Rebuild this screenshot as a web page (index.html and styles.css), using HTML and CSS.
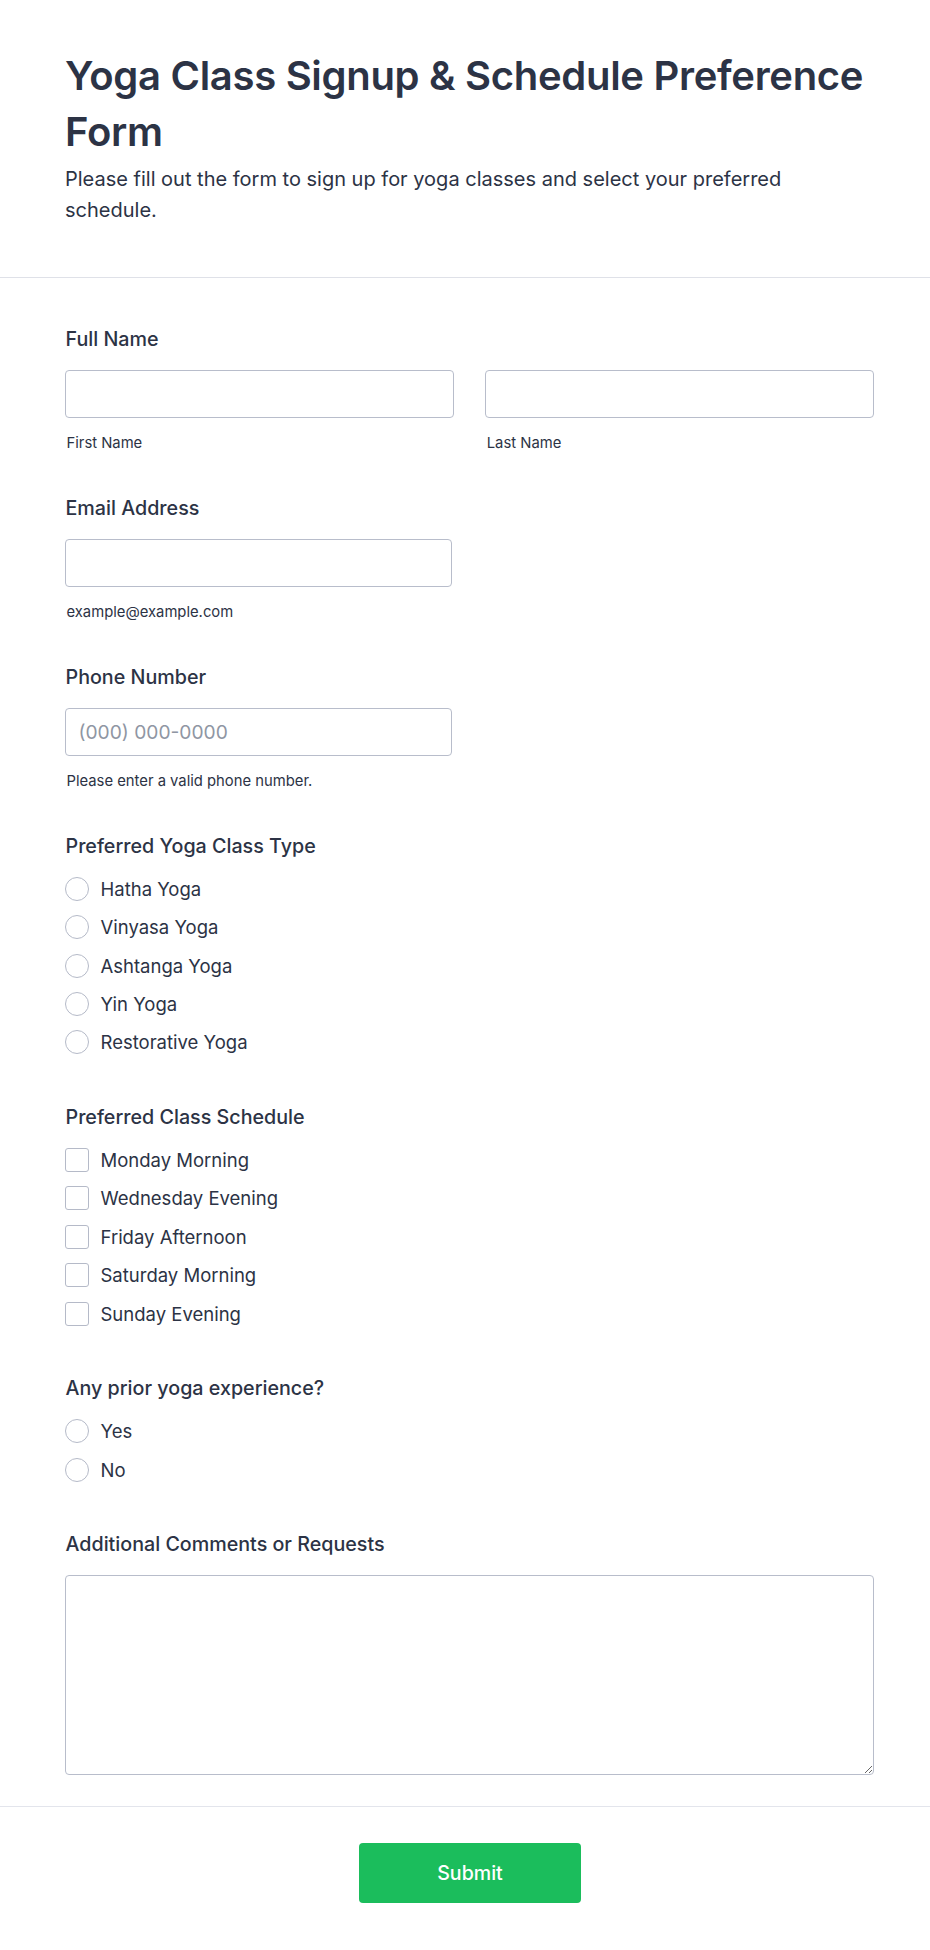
FILE: index.html
```html
<!DOCTYPE html>
<html lang="en">
<head>
<meta charset="utf-8">
<title>Yoga Class Signup &amp; Schedule Preference Form</title>
<link rel="stylesheet" href="styles.css">
</head>
<body>
<form class="form">
  <header class="form-header">
    <h1 class="form-title">Yoga Class Signup &amp; Schedule Preference Form</h1>
    <p class="form-desc">Please fill out the form to sign up for yoga classes and select your preferred schedule.</p>
  </header>

  <div class="form-body">
    <div class="field">
      <div class="label">Full Name</div>
      <div class="name-grid">
        <div class="name-col">
          <input class="input" type="text" aria-label="First Name">
          <div class="sublabel">First Name</div>
        </div>
        <div class="name-col">
          <input class="input" type="text" aria-label="Last Name">
          <div class="sublabel">Last Name</div>
        </div>
      </div>
    </div>

    <div class="field">
      <div class="label">Email Address</div>
      <input class="input input-half" type="email" aria-label="Email Address">
      <div class="sublabel">example@example.com</div>
    </div>

    <div class="field">
      <div class="label">Phone Number</div>
      <input class="input input-half" type="tel" placeholder="(000) 000-0000" aria-label="Phone Number">
      <div class="sublabel">Please enter a valid phone number.</div>
    </div>

    <div class="field field-choice">
      <div class="label">Preferred Yoga Class Type</div>
      <div class="options">
        <label class="option"><span class="radio"></span><span class="option-text">Hatha Yoga</span></label>
        <label class="option"><span class="radio"></span><span class="option-text">Vinyasa Yoga</span></label>
        <label class="option"><span class="radio"></span><span class="option-text">Ashtanga Yoga</span></label>
        <label class="option"><span class="radio"></span><span class="option-text">Yin Yoga</span></label>
        <label class="option"><span class="radio"></span><span class="option-text">Restorative Yoga</span></label>
      </div>
    </div>

    <div class="field field-choice">
      <div class="label">Preferred Class Schedule</div>
      <div class="options">
        <label class="option"><span class="checkbox"></span><span class="option-text">Monday Morning</span></label>
        <label class="option"><span class="checkbox"></span><span class="option-text">Wednesday Evening</span></label>
        <label class="option"><span class="checkbox"></span><span class="option-text">Friday Afternoon</span></label>
        <label class="option"><span class="checkbox"></span><span class="option-text">Saturday Morning</span></label>
        <label class="option"><span class="checkbox"></span><span class="option-text">Sunday Evening</span></label>
      </div>
    </div>

    <div class="field field-choice">
      <div class="label">Any prior yoga experience?</div>
      <div class="options">
        <label class="option"><span class="radio"></span><span class="option-text">Yes</span></label>
        <label class="option"><span class="radio"></span><span class="option-text">No</span></label>
      </div>
    </div>

    <div class="field field-last">
      <div class="label">Additional Comments or Requests</div>
      <textarea class="textarea" aria-label="Additional Comments or Requests"></textarea>
    </div>
  </div>

  <div class="form-footer">
    <button class="submit" type="button">Submit</button>
  </div>
</form>
</body>
</html>
```

FILE: styles.css
```css
* {
  box-sizing: border-box;
}

html, body {
  margin: 0;
  padding: 0;
  background: #ffffff;
}

body {
  font-family: Inter, "Noto Sans", "Liberation Sans", sans-serif;
  color: #2c3345;
}

.form {
  display: flex;
  flex-direction: column;
}

.form-header {
  padding: 48.4px 55px 51px 65px;
  border-bottom: 1px solid #dfe1e8;
}

.form-title {
  margin: 0;
  font-size: 40px;
  line-height: 56px;
  font-weight: 600;
  letter-spacing: -0.3px;
  color: #2c3345;
}

.form-desc {
  margin: 3.5px 0 0;
  font-size: 20px;
  line-height: 31px;
  font-weight: 400;
  color: #2c3345;
  max-width: 760px;
}

.form-body {
  padding: 49.5px 56px 30.5px 64.5px;
  display: flex;
  flex-direction: column;
}

.field {
  display: flex;
  flex-direction: column;
  margin-bottom: 43.5px;
}

.field-choice {
  margin-bottom: 50.8px;
}

.field-last {
  margin-bottom: 0;
}

.label {
  font-size: 19.7px;
  line-height: 24px;
  font-weight: 500;
  color: #2c3345;
  margin-bottom: 18.5px;
  padding-left: 1px;
}

.field-choice .label {
  margin-bottom: 18.8px;
}

.field-last .label {
  margin-bottom: 18.2px;
}

.name-grid {
  display: grid;
  grid-template-columns: 1fr 1fr;
  column-gap: 31px;
}

.name-col {
  display: flex;
  flex-direction: column;
}

.input {
  display: block;
  width: 100%;
  height: 48.6px;
  border: 1px solid #b8bdcb;
  border-radius: 4px;
  background: #fff;
  padding: 0 13px;
  font-family: inherit;
  font-size: 19.2px;
  color: #2c3345;
  margin: 0;
}

.input::placeholder {
  color: #8f96a3;
}

.input-half {
  width: 387px;
}

.sublabel {
  margin-top: 14.3px;
  font-size: 14.8px;
  line-height: 20px;
  color: #2c3345;
  padding-left: 2px;
}

.options {
  display: flex;
  flex-direction: column;
  gap: 14.4px;
}

.option {
  display: flex;
  align-items: center;
  gap: 12px;
  height: 24px;
}

.radio {
  width: 24px;
  height: 24px;
  border: 1.5px solid #b5bac8;
  border-radius: 50%;
  flex: none;
  background: #fff;
}

.checkbox {
  width: 24px;
  height: 24px;
  border: 1.5px solid #b5bac8;
  border-radius: 3px;
  flex: none;
  background: #fff;
}

.option-text {
  font-size: 18.5px;
  line-height: 24px;
  color: #2c3345;
}

.textarea {
  display: block;
  width: 100%;
  height: 200.5px;
  border: 1px solid #b8bdcb;
  border-radius: 4px;
  background: #fff;
  padding: 10px 13px;
  font-family: inherit;
  font-size: 19px;
  margin: 0;
  resize: vertical;
}

.form-footer {
  border-top: 1px solid #e3e5ec;
  padding: 36.7px 55px 50px 65px;
  display: flex;
  justify-content: center;
}

.submit {
  width: 222px;
  height: 59.3px;
  background: #1bbd5c;
  border: 0;
  border-radius: 4px;
  color: #ffffff;
  font-family: inherit;
  font-size: 19.6px;
  font-weight: 500;
  cursor: pointer;
}
```
